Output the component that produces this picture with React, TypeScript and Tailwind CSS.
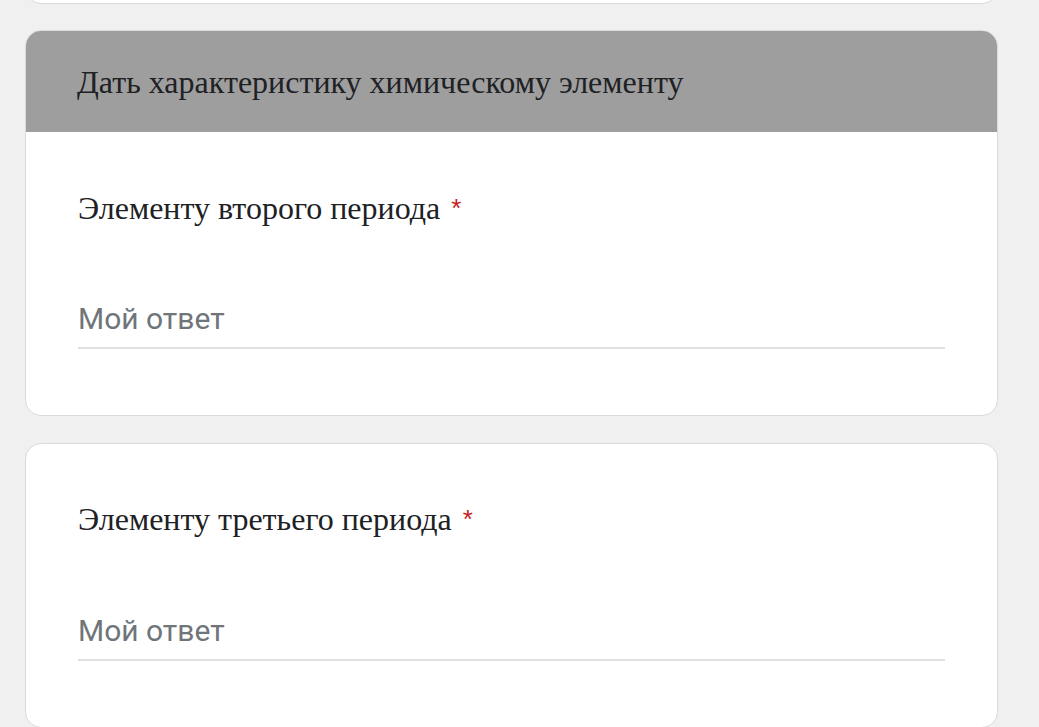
import React from "react";

function Question({ title, first }: { title: string; first?: boolean }) {
  return (
    <div className={first ? "px-[52px] pt-[56px] pb-[66px]" : "px-[52px] pt-[55px] pb-[66px]"}>
      <div className="text-[32px] leading-[40px] text-[#202124] font-['Liberation_Serif',serif]">
        {title}
        <span className="text-[#c5221f] text-[26px] align-top ml-[11px] font-['Liberation_Sans',sans-serif]">*</span>
      </div>
      <div className={first ? "mt-[71px] border-b-2 border-[#e0e0e0] pb-[8px]" : "mt-[72px] border-b-2 border-[#e0e0e0] pb-[8px]"}>
        <div className="text-[30px] leading-[40px] text-[#70757a] font-['Roboto',sans-serif]">Мой ответ</div>
      </div>
    </div>
  );
}

export default function App() {
  return (
    <div className="min-h-[727px] w-full bg-[#f0f0f0] overflow-hidden">
      <div className="ml-[25px] w-[973px] h-[60px] -mt-[56px] bg-white border border-[#dadada] rounded-2xl" />
      <div className="ml-[25px] w-[973px] mt-[26px] bg-white border border-[#dadada] rounded-2xl overflow-hidden">
        <div className="h-[101px] bg-[#9e9e9e] px-[51px] pt-[31px]">
          <div className="text-[32px] leading-[40px] text-[#202124] font-['Liberation_Serif',serif]">
            Дать характеристику химическому элементу
          </div>
        </div>
        <Question title="Элементу второго периода" first />
      </div>
      <div className="ml-[25px] w-[973px] mt-[27px] bg-white border border-[#dadada] rounded-2xl">
        <Question title="Элементу третьего периода" />
      </div>
    </div>
  );
}
